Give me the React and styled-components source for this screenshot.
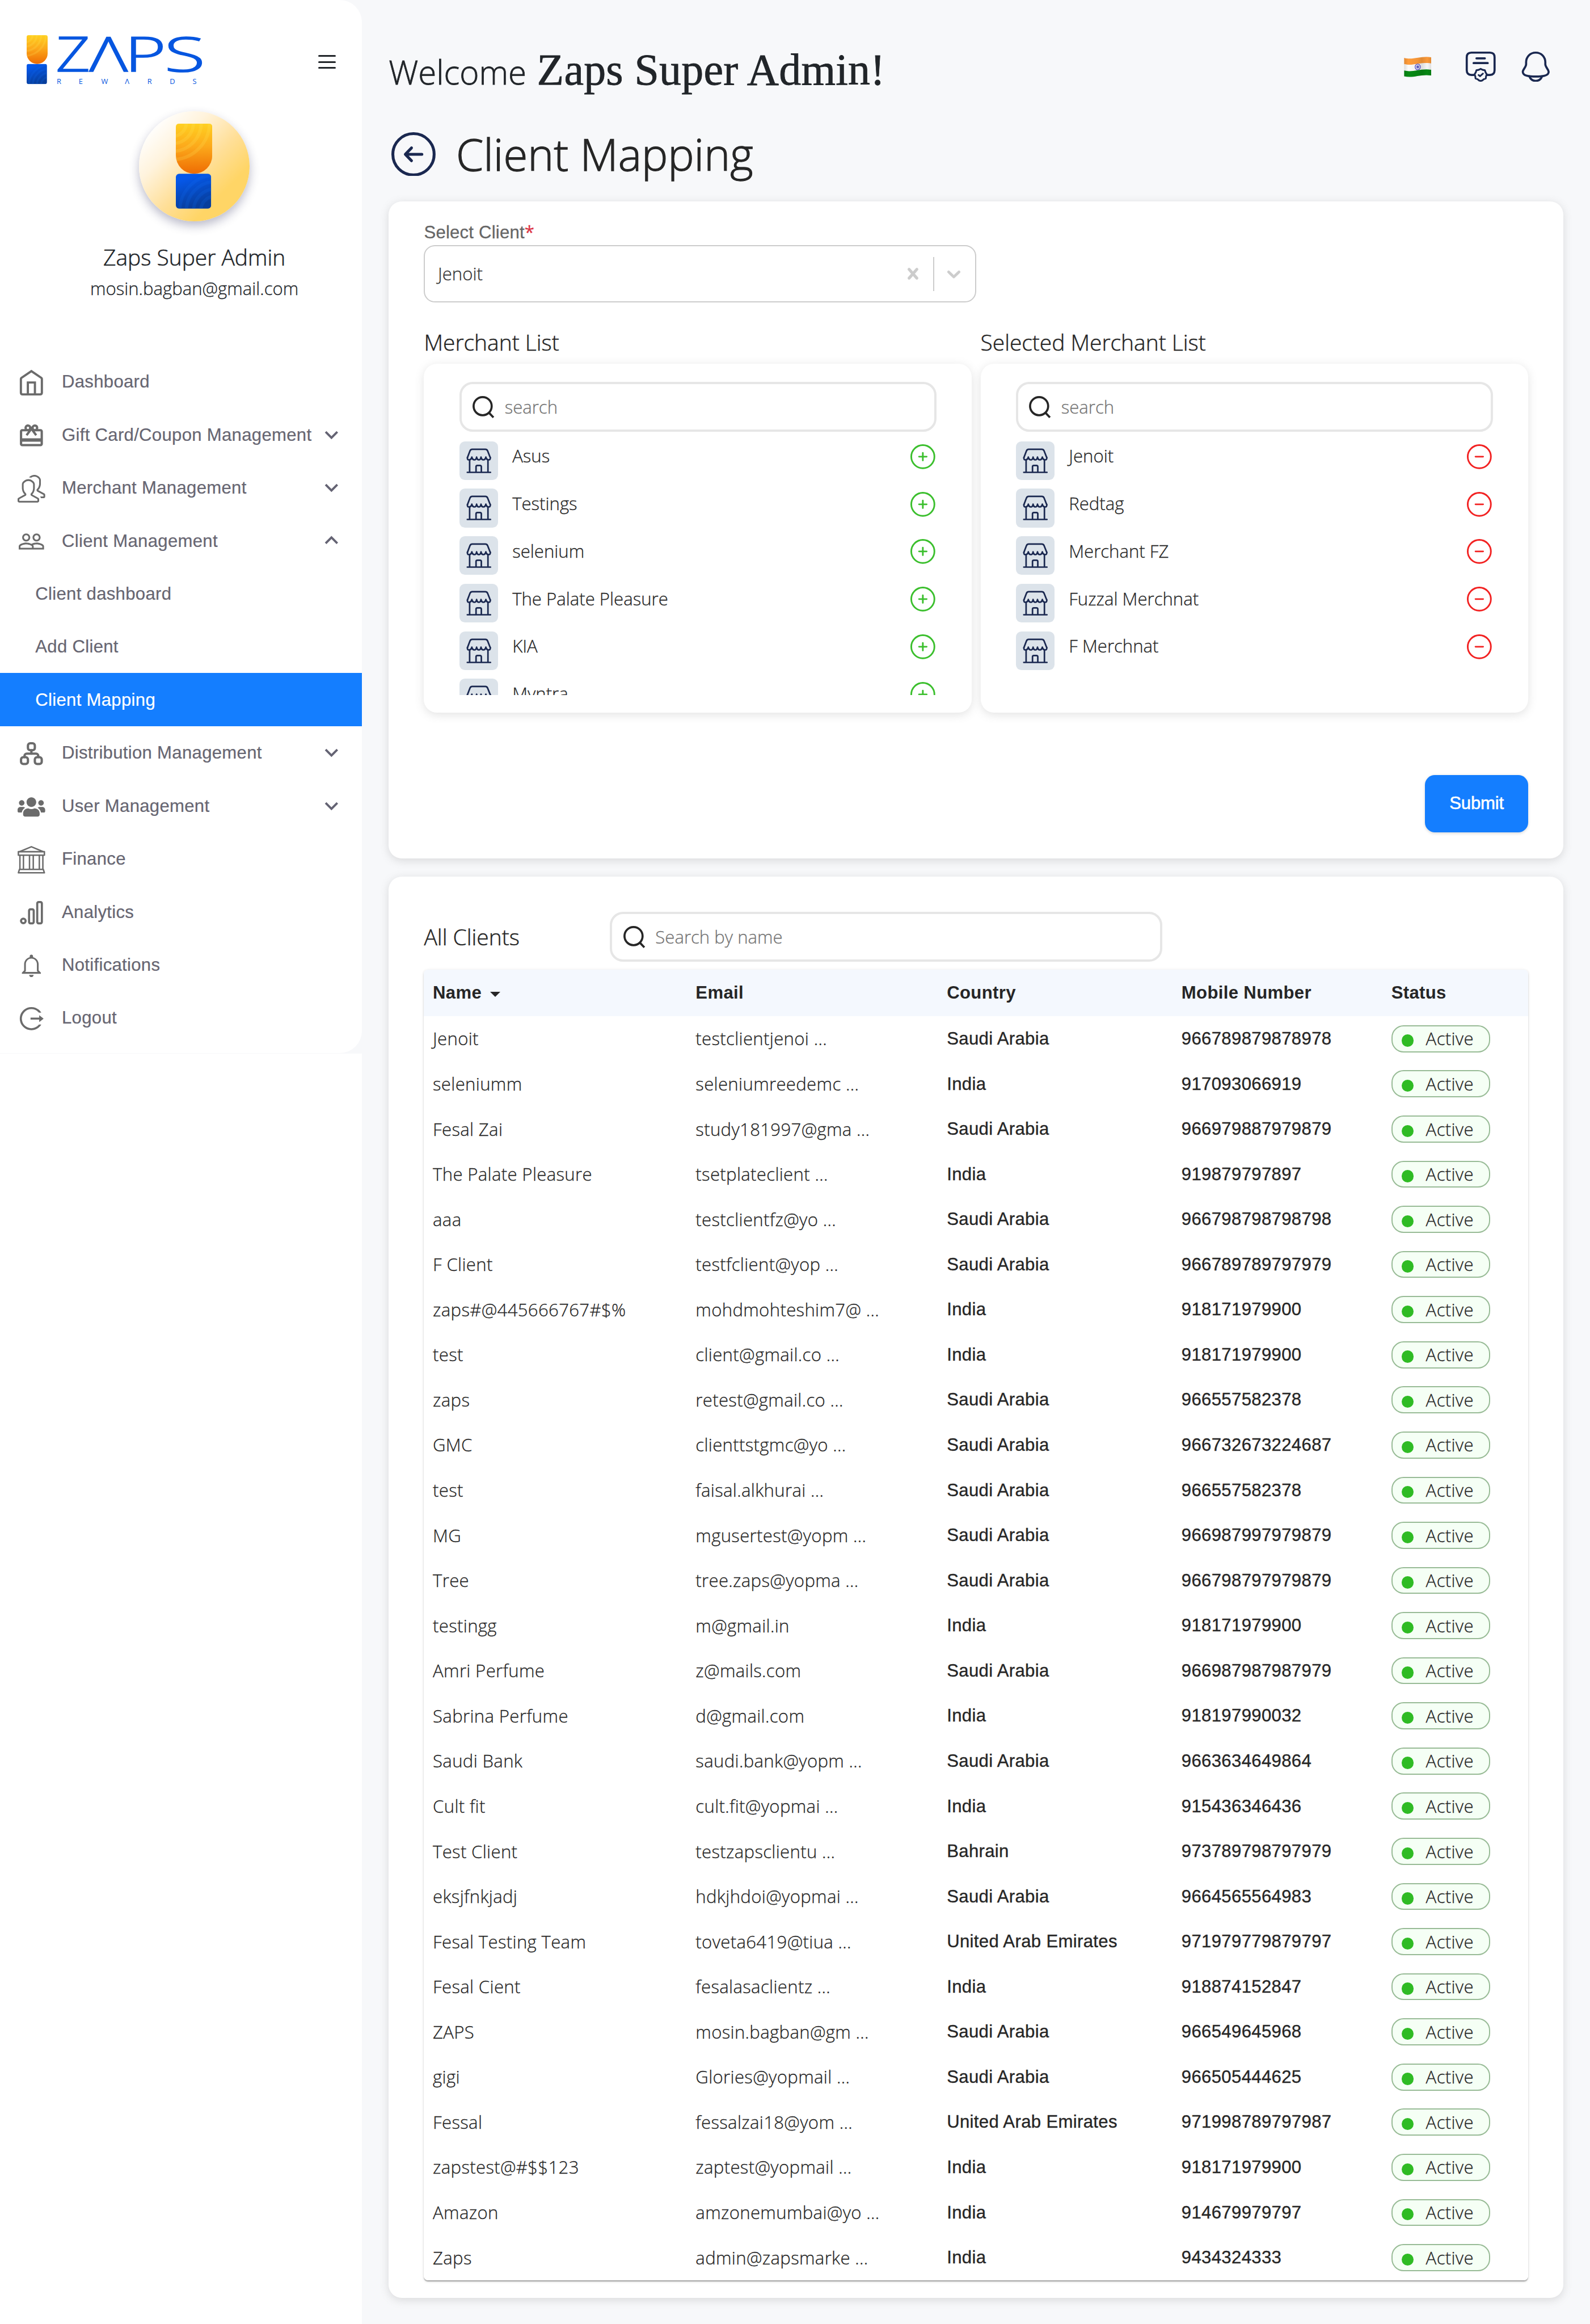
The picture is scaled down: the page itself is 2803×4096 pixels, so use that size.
import React from "react";
import styled, { createGlobalStyle, css } from "styled-components";
import {
  MdKeyboardArrowDown,
  MdKeyboardArrowUp,
  MdOutlineRedeem,
  MdPeopleOutline,
} from "react-icons/md";
import { SlPeople } from "react-icons/sl";
import { TbSitemap } from "react-icons/tb";
import { FaUsers } from "react-icons/fa";
import { IoMdNotificationsOutline } from "react-icons/io";
import { AiOutlineLogout } from "react-icons/ai";

const sans = `"Liberation Sans", Arial, sans-serif`;
const open = `"Open Sans", "Noto Sans", sans-serif`;
const serif = `"Liberation Serif", "Times New Roman", serif`;
const hair = "1.04px";
const thick = "2.06px";

const GlobalStyle = createGlobalStyle`
  * { box-sizing: border-box; }
  html, body { margin: 0; padding: 0; background: #f7f8fa; overflow: hidden; }
  h1, h2, h3, p, ul { margin: 0; padding: 0; font-weight: inherit; }
  button, input { font: inherit; }
`;

/* The layout is written for a 1440px canvas and magnified as a whole. */
const Page = styled.div`
  zoom: 1.9466;
  display: flex;
  width: 1440px;
  height: 2104.2px;
  font-family: ${open};
  font-weight: 300;
  font-size: 16px;
  line-height: 24px;
  color: #262626;
  -webkit-text-stroke: 0.16px currentColor;
`;

/* ---------- sidebar ---------- */

const SideColumn = styled.aside`
  width: 328px;
  flex: none;
  background: #fff;
`;

const SideBackdrop = styled.div`
  height: 954px;
  background: #f7f8fa;
`;

const SidePanel = styled.div`
  height: 953.5px;
  background: #fff;
  border-radius: 0 20px 20px 0;
  display: flex;
  flex-direction: column;
`;

const LogoRow = styled.div`
  display: flex;
  justify-content: space-between;
  padding: 32px 24px 0 24px;
  height: 100.5px;
`;

const MenuLines = styled.div`
  display: flex;
  flex-direction: column;
  gap: 4px;
  margin-top: 17.8px;
  width: 16px;
  height: 13px;
  span {
    height: 1.5px;
    border-radius: 1px;
    background: #212529;
  }
`;

const Profile = styled.div`
  display: flex;
  flex-direction: column;
  align-items: center;
  padding-left: 24px;
  color: #212529;
  height: 221px;
`;

const Avatar = styled.div`
  width: 100px;
  height: 100px;
  border-radius: 50%;
  display: flex;
  align-items: center;
  justify-content: center;
  background: linear-gradient(135deg, #ffffff 12%, #fff3dc 32%, #ffdf98 55%, #ffd566 75%);
  box-shadow: 0 4px 9px rgba(30, 30, 80, 0.3);
`;

const ProfileName = styled.p`
  margin-top: 17.5px;
  font-size: 20px;
  line-height: 30px;
  -webkit-text-stroke-width: 0.28px;
`;

const ProfileMail = styled.p`
  margin-top: 1.3px;
`;

const Nav = styled.nav`
  display: flex;
  flex-direction: column;
`;

const NavItem = styled.div`
  display: flex;
  align-items: center;
  height: 48px;
  padding-left: ${(p) => (p.$sub ? 32 : 16)}px;
  padding-right: 16px;
  font-family: ${sans};
  font-weight: 400;
  letter-spacing: 0.15px;
  color: ${(p) => (p.$active ? "#fff" : "#676672")};
  background: ${(p) => (p.$active ? "#147eff" : "transparent")};
  -webkit-text-stroke-width: 0.12px;
`;

const NavIcon = styled.span`
  display: flex;
  align-items: center;
  justify-content: center;
  width: 25px;
  height: 25px;
  margin: 2px 15px 0 0;
  color: #6b6b6b;
`;

const NavText = styled.span`
  flex: 1;
  padding-top: 1.2px;
  white-space: nowrap;
`;

const NavChevron = styled.span`
  display: flex;
  color: #646373;
`;

/* ---------- main ---------- */

const Main = styled.main`
  flex: 1;
  min-width: 0;
  padding: 39px 24px 0;
  background: #f7f8fa;
`;

const TopBar = styled.header`
  display: flex;
  justify-content: space-between;
  height: 48px;
`;

const Greeting = styled.h1`
  display: flex;
  align-items: baseline;
  height: 48px;
  padding-top: 0.4px;
  font-size: 30px;
  line-height: 48px;
  color: #212529;
  white-space: pre;
  -webkit-text-stroke-width: 0.4px;
`;

const UserName = styled.span`
  margin-left: 1.7px;
  font-family: ${serif};
  font-weight: 400;
  font-size: 40px;
  letter-spacing: 0.12px;
`;

const TopIcons = styled.div`
  display: flex;
  align-items: flex-start;
  padding: 7px 12px 0 0;
  color: #1a2850;
  svg {
    display: block;
  }
`;

const FlagBox = styled.span`
  margin: 5.3px 30.7px 0 0;
`;

const CertBox = styled.span`
  margin-right: 23px;
`;

const TitleRow = styled.div`
  display: flex;
  align-items: center;
  height: 48px;
  margin-top: 28.5px;
  padding-left: 2.4px;
  gap: 18.6px;
  color: #1a2850;
`;

const Title = styled.h2`
  padding-top: 0.6px;
  font-size: 40px;
  line-height: 48px;
  color: #262626;
  -webkit-text-stroke-width: 0.65px;
`;

const Card = styled.section`
  background: #fff;
  border-radius: 12px;
  box-shadow: 0 2px 8px rgba(99, 99, 99, 0.2);
`;

const MappingCard = styled(Card)`
  height: 595px;
  margin-top: 19px;
  padding: 15.5px 32px 0;
`;

const Label = styled.label`
  display: block;
  height: 24px;
  padding-top: 0.8px;
  font-family: ${sans};
  font-weight: 400;
  letter-spacing: 0.1px;
  color: #666;
`;

const Required = styled.span`
  font-family: ${open};
  line-height: 1;
  color: #dc3545;
`;

const Select = styled.div`
  display: flex;
  align-items: center;
  width: 500px;
  height: 52px;
  border: ${hair} solid #ccc;
  border-radius: 10px;
  padding: 0 1px 0 11.6px;
  color: #333;
`;

const SelectValue = styled.span`
  flex: 1;
`;

const Indicator = styled.span`
  display: flex;
  padding: 8px;
  color: #ccc;
`;

const Separator = styled.span`
  width: ${hair};
  height: 31px;
  background: #ccc;
`;

const Lists = styled.div`
  display: grid;
  grid-template-columns: 496px 496px;
  gap: 8px;
  margin-top: 21px;
`;

const Heading = styled.h3`
  font-size: 20px;
  line-height: 30px;
  white-space: nowrap;
  -webkit-text-stroke-width: 0.26px;
`;

const ListPanel = styled.div`
  height: 316px;
  margin-top: 4.5px;
  padding: 16.3px 32px;
  border-radius: 12px;
  background: #fff;
  box-shadow: 0 2px 8px rgba(99, 99, 99, 0.18);
`;

const SearchBox = styled.div`
  display: flex;
  align-items: center;
  width: ${(p) => p.$width || "100%"};
  height: 45.3px;
  padding-left: 8.8px;
  gap: 8.2px;
  border: ${thick} solid #e6e6e6;
  border-radius: 12px;
  color: #757575;
  svg {
    flex: none;
    color: #262626;
  }
`;

const ListBody = styled.div`
  height: 238.3px;
  padding-top: 8.5px;
  overflow: hidden;
`;

const ListItem = styled.div`
  display: flex;
  align-items: flex-start;
  height: 43px;
`;

const StoreTile = styled.span`
  display: flex;
  width: 35px;
  height: 35px;
  border-radius: 5px;
  background: #dce3ea;
  color: #1a2850;
`;

const ItemName = styled.span`
  flex: 1;
  margin: 1.4px 0 0 13px;
`;

const ItemAction = styled.span`
  display: flex;
  margin: 2.2px 0.5px 0 0;
  color: ${(p) => (p.$remove ? "#f22222" : "#3bbf2d")};
`;

const SubmitRow = styled.div`
  display: flex;
  justify-content: flex-end;
  margin-top: 56.3px;
`;

const SubmitButton = styled.button`
  width: 93.5px;
  height: 52px;
  border: 0;
  border-radius: 9px;
  padding: 0;
  font-family: ${sans};
  font-weight: 400;
  letter-spacing: -0.1px;
  color: #fff;
  background: #147eff;
  box-shadow: 0 1px 3px rgba(0, 0, 0, 0.15);
  -webkit-text-stroke: 0.3px #fff;
`;

const ClientsCard = styled(Card)`
  height: 1287px;
  margin-top: 16px;
  padding: 32px 32px 0;
`;

const ClientsHead = styled.div`
  display: grid;
  grid-template-columns: 168.5px auto;
  align-items: center;
  justify-content: start;
  height: 45px;
`;

const Table = styled.div`
  margin-top: 7.6px;
  border-radius: 4px;
  overflow: hidden;
  background: #fff;
  letter-spacing: 0.17px;
`;

const TableShell = styled.div`
  border-radius: 4px;
  box-shadow: 0 2px 1px -1px rgba(0, 0, 0, 0.2), 0 1px 1px rgba(0, 0, 0, 0.14),
    0 1px 3px rgba(0, 0, 0, 0.12);
`;

const rowGrid = css`
  display: grid;
  grid-template-columns: 238px 227.5px 212.5px 190px 1fr;
  align-items: center;
  padding-left: 8px;
`;

const HeadRow = styled.div`
  ${rowGrid}
  height: 42px;
  background: #f4f8fe;
  font-family: ${sans};
  font-weight: 700;
  color: #262626;
  -webkit-text-stroke-width: 0;
`;

const HeadCell = styled.span`
  display: flex;
  align-items: center;
  padding-top: 0.4px;
`;

const SortCaret = styled.span`
  width: 0;
  height: 0;
  margin: 2px 0 0 7.5px;
  border-left: 5px solid transparent;
  border-right: 5px solid transparent;
  border-top: 5px solid #262626;
`;

const Row = styled.div`
  ${rowGrid}
  height: 40.875px;
`;

const Cell = styled.span`
  white-space: pre;
  line-height: 24px;
`;

const PlainCell = styled(Cell)`
  padding-top: 0.6px;
  font-family: ${sans};
  font-weight: 400;
  -webkit-text-stroke-width: 0.2px;
`;

const Pill = styled.span`
  display: flex;
  align-items: center;
  width: 89.5px;
  height: 24.5px;
  padding-left: 8.3px;
  gap: 11px;
  border: ${hair} solid #98bb96;
  border-radius: 11px;
  background: #f5fff5;
`;

const Dot = styled.span`
  width: 11px;
  height: 11px;
  margin-top: 3.5px;
  border-radius: 50%;
  background: #2fbb24;
`;

/* ---------- drawings ---------- */

const Mark = ({ width, id }) => (
  <svg width={width} height={(width * 77) / 33} viewBox="0 0 33 77">
    <defs>
      <linearGradient id={`${id}c`} x1="0" y1="0" x2="0" y2="1">
        <stop offset="0" stopColor="#ffd021" />
        <stop offset="0.45" stopColor="#fca91b" />
        <stop offset="1" stopColor="#ee6a02" />
      </linearGradient>
      <linearGradient id={`${id}b`} x1="0" y1="0" x2="0.3" y2="1">
        <stop offset="0.2" stopColor="#0558ea" />
        <stop offset="1" stopColor="#073e9c" />
      </linearGradient>
      <clipPath id={`${id}k`}>
        <path d="M3 0H30Q33 0 33 3V28.8A16.5 16.5 0 0 1 0 28.8V3Q0 0 3 0Z" />
      </clipPath>
      <clipPath id={`${id}l`}>
        <rect x="0" y="45.3" width="32" height="31.6" rx="3" />
      </clipPath>
    </defs>
    <g clipPath={`url(#${id}k)`}>
      <rect width="33" height="46" fill={`url(#${id}c)`} />
      <g fill="none" stroke="#ffe75a" strokeOpacity="0.2" strokeWidth="3">
        <circle cx="-3" cy="-1" r="12.5" />
        <circle cx="-3" cy="-1" r="19" />
        <circle cx="-3" cy="-1" r="26" />
        <circle cx="-3" cy="-1" r="33.5" />
      </g>
    </g>
    <g clipPath={`url(#${id}l)`}>
      <rect y="45" width="32" height="32" fill={`url(#${id}b)`} />
      <g fill="none" stroke="#1378ff" strokeOpacity="0.16" strokeWidth="3">
        <circle cx="36" cy="79" r="13.5" />
        <circle cx="36" cy="79" r="20" />
        <circle cx="36" cy="79" r="26.5" />
        <circle cx="36" cy="79" r="32.5" />
      </g>
    </g>
  </svg>
);

const LogoBox = styled.div`
  display: flex;
  gap: 9px;
  svg {
    overflow: visible;
  }
`;

const Wordmark = () => (
  <svg width="132" height="46" viewBox="0 0 132 46" fill="#0656e0" fontFamily={open}>
    <g fontSize="43.7" fontWeight="300" stroke="#0656e0" strokeWidth="0.8">
      <text x="-1.3" y="33" textLength="31" lengthAdjust="spacingAndGlyphs">Z</text>
      <text x="29" y="33" textLength="34.7" lengthAdjust="spacingAndGlyphs">Λ</text>
      <text x="61" y="33" textLength="37.5" lengthAdjust="spacingAndGlyphs">P</text>
      <text x="97" y="33" textLength="37" lengthAdjust="spacingAndGlyphs">S</text>
    </g>
    <text x="-0.5 19.4 39.8 61.3 81.5 101.8 122.5" y="44.3" fontSize="6.6" fontWeight="400" stroke="none">
      REWΛRDS
    </text>
  </svg>
);

const line = {
  fill: "none",
  stroke: "currentColor",
  strokeLinecap: "round",
  strokeLinejoin: "round",
};

const BackIcon = () => (
  <svg width="40" height="40" viewBox="0 0 40 40" {...line} strokeWidth="2.6">
    <circle cx="20" cy="20" r="18.7" />
    <path d="M27.6 20H12.8M18.2 14.2L12.6 20L18.2 25.8" />
  </svg>
);

const HomeIcon = () => (
  <svg width="25" height="25" viewBox="0 0 25 25" {...line} strokeWidth="2" strokeLinejoin="miter">
    <path d="M3 9.2Q3 8.6 3.5 8.2L12.5 2.1L21.5 8.2Q22 8.6 22 9.2V21.6Q22 23.2 20.4 23.2H4.6Q3 23.2 3 21.6Z" />
    <path d="M9.3 23V12.4H15.7V23" strokeLinecap="butt" />
  </svg>
);

const BankIcon = () => (
  <svg width="25" height="25" viewBox="0 0 25 25" {...line} strokeWidth="1.3">
    <path d="M2.2 5L12.5 0.7L22.8 5" />
    <path d="M0.7 5.2H24.3V8.3H0.7Z" />
    <path d="M2.1 8.5V21M5.3 8.5V21M10.8 8.5V21M14.2 8.5V21M19.7 8.5V21M22.9 8.5V21" />
    <path d="M1.7 21.2H23.3L24.3 24.3H0.7Z" />
  </svg>
);

const ChartIcon = () => (
  <svg width="25" height="25" viewBox="0 0 25 25" {...line} strokeWidth="1.9">
    <circle cx="5.2" cy="20.1" r="2.1" />
    <rect x="10.4" y="9.6" width="4.2" height="12.7" rx="1.2" />
    <rect x="17.8" y="3" width="4.2" height="19.3" rx="1.2" />
  </svg>
);

const SearchIcon = () => (
  <svg width="22" height="22" viewBox="0 0 22 22" {...line} strokeWidth="1.9" strokeLinecap="butt">
    <circle cx="10.2" cy="10.2" r="8.2" />
    <path d="M15.4 15.6L20 20.4" />
  </svg>
);

const StoreIcon = () => (
  <svg width="35" height="35" viewBox="0 0 35 35" {...line} strokeWidth="1.4">
    <path d="M7.2 14.6L9.6 8.4Q10.2 7.1 11.5 7.1H23.5Q24.8 7.1 25.4 8.4L27.9 14.6" />
    <path d="M7.2 14.6Q6.9 16.6 8.6 16.7Q10.6 16.7 11.2 14.2Q11.8 16.7 13.5 16.7Q15.1 16.7 15.5 14.2Q16 16.7 17.5 16.7Q19.1 16.7 19.5 14.2Q20 16.7 21.6 16.7Q23.3 16.7 23.9 14.2Q24.5 16.7 26.4 16.7Q28.2 16.6 27.9 14.6" />
    <path d="M9.2 17V27.6M25.8 17V27.6M7.1 28H28.1" />
    <path d="M15 27.6V23Q15 21.8 16.2 21.8H18.6Q19.8 21.8 19.8 23V27.6" />
  </svg>
);

const CircleIcon = ({ minus }) => (
  <svg width="23.5" height="23.5" viewBox="0 0 23.5 23.5" {...line} strokeWidth="1.5">
    <circle cx="11.75" cy="11.75" r="10.5" />
    <path d={minus ? "M8.3 11.75H15.2" : "M8.3 11.75H15.2M11.75 8.3V15.2"} />
  </svg>
);

const CrossIcon = () => (
  <svg width="20" height="20" viewBox="0 0 20 20" fill="currentColor" stroke="currentColor" strokeWidth="0.3">
    <path d="M14.348 14.849c-0.469 0.469-1.229 0.469-1.697 0l-2.651-3.030-2.651 3.029c-0.469 0.469-1.229 0.469-1.697 0-0.469-0.469-0.469-1.229 0-1.697l2.758-3.15-2.759-3.152c-0.469-0.469-0.469-1.228 0-1.697s1.228-0.469 1.697 0l2.652 3.031 2.651-3.031c0.469-0.469 1.228-0.469 1.697 0s0.469 1.229 0 1.697l-2.758 3.152 2.758 3.15c0.469 0.469 0.469 1.229 0 1.698z" />
  </svg>
);

const DownIcon = () => (
  <svg width="20" height="20" viewBox="0 0 20 20" fill="currentColor" stroke="currentColor" strokeWidth="0.3">
    <path d="M4.516 7.548c0.436-0.446 1.043-0.481 1.576 0l3.908 3.747 3.908-3.747c0.533-0.481 1.141-0.446 1.574 0 0.436 0.445 0.408 1.197 0 1.615-0.406 0.418-4.695 4.502-4.695 4.502-0.217 0.223-0.502 0.335-0.787 0.335s-0.57-0.112-0.789-0.335c0 0-4.287-4.084-4.695-4.502s-0.436-1.17 0-1.615z" />
  </svg>
);

const Flag = () => (
  <svg width="25" height="18.4" viewBox="0 0 25 18.4">
    <defs>
      <linearGradient id="shade" x1="0" y1="0" x2="1" y2="0">
        <stop offset="0" stopColor="#000" stopOpacity="0.12" />
        <stop offset="0.15" stopColor="#000" stopOpacity="0" />
        <stop offset="0.5" stopColor="#000" stopOpacity="0.05" />
        <stop offset="0.65" stopColor="#000" stopOpacity="0.12" />
        <stop offset="0.85" stopColor="#000" stopOpacity="0.02" />
        <stop offset="1" stopColor="#000" stopOpacity="0.12" />
      </linearGradient>
    </defs>
    <path fill="#ff9c3a" d="M0.2 1C8 3.4 15 -1 24.8 0.5V6.2C15 4.6 8 9 0.2 6.8Z" />
    <path fill="#fbfbfb" d="M0.2 6.6C8 8.8 15 4.4 24.8 6V12C15 10.4 8 14.8 0.2 12.6Z" />
    <path fill="#078a14" d="M0.2 12.5C8 14.6 15 10.2 24.8 11.8V17C15 15.4 8 19.8 0.2 17.7Z" />
    <g fill="none" stroke="#4640c8" strokeWidth="0.6">
      <ellipse cx="12.5" cy="9.2" rx="2.4" ry="2.6" />
      <circle cx="12.5" cy="9.2" r="1.3" strokeWidth="0.4" />
    </g>
    <circle cx="12.5" cy="9.2" r="0.8" fill="#3a35b8" />
    <path fill="url(#shade)" d="M0.2 1C8 3.4 15 -1 24.8 0.5V17C15 15.4 8 19.8 0.2 17.7Z" />
  </svg>
);

const CertificateIcon = () => (
  <svg width="28" height="28" viewBox="0 0 28 28" {...line} strokeWidth="1.9">
    <path d="M7.8 21.6H5.6Q1.4 21.6 1.4 17.4V5.6Q1.4 1.4 5.6 1.4H22.4Q26.6 1.4 26.6 5.6V17.4Q26.6 21.6 22.4 21.6H20" />
    <path d="M10.2 6.6H17.8M7.6 10.9H20.4" />
    <path
      strokeWidth="1.6"
      d="M14 16.1L15.8 17L17.8 17.3L18.4 19.2L19.5 21L18.9 22.8L18.6 24.8L16.8 25.5L15.5 26.6L14 27.1L12.5 26.6L11.2 25.5L9.4 24.8L9.1 22.8L8.5 21L9.6 19.2L10.2 17.3L12.2 17Z"
    />
    <path strokeWidth="1.5" d="M12.1 21.7L13.4 22.8L16.1 20.4" />
  </svg>
);

const BellIcon = () => (
  <svg width="26" height="28" viewBox="0 0 26 28" {...line} strokeWidth="1.9">
    <path d="M13 1.4C7.9 1.4 4.3 5.3 4.3 10.2V12C4.3 14.6 1.4 16.4 1.3 18.8C1.2 22.6 7.6 23.1 13 23.1S24.8 22.6 24.7 18.8C24.6 16.4 21.7 14.6 21.7 12V10.2C21.7 5.3 18.1 1.4 13 1.4Z" />
    <path d="M7.3 23C8.3 25.5 10.4 27 13 27S17.7 25.5 18.7 23" />
  </svg>
);

/* ---------- data ---------- */

const navItems = [
  { label: "Dashboard", icon: <HomeIcon /> },
  { label: "Gift Card/Coupon Management", icon: <MdOutlineRedeem size={25} />, open: false },
  { label: "Merchant Management", icon: <SlPeople size={25} />, open: false },
  { label: "Client Management", icon: <MdPeopleOutline size={25} />, open: true },
  { label: "Client dashboard", sub: true },
  { label: "Add Client", sub: true },
  { label: "Client Mapping", sub: true, active: true },
  { label: "Distribution Management", icon: <TbSitemap size={25} />, open: false },
  { label: "User Management", icon: <FaUsers size={25} />, open: false },
  { label: "Finance", icon: <BankIcon /> },
  { label: "Analytics", icon: <ChartIcon /> },
  { label: "Notifications", icon: <IoMdNotificationsOutline size={25} /> },
  { label: "Logout", icon: <AiOutlineLogout size={25} /> },
];

const merchants = ["Asus", "Testings", "selenium", "The Palate Pleasure", "KIA", "Myntra"];
const selected = ["Jenoit", "Redtag", "Merchant FZ", "Fuzzal Merchnat", "F Merchnat"];

const clients = [
  ["Jenoit", "testclientjenoi ...", "Saudi Arabia", "966789879878978"],
  ["seleniumm", "seleniumreedemc ...", "India", "917093066919"],
  ["Fesal Zai", "study181997@gma ...", "Saudi Arabia", "966979887979879"],
  ["The Palate Pleasure", "tsetplateclient ...", "India", "919879797897"],
  ["aaa", "testclientfz@yo ...", "Saudi Arabia", "966798798798798"],
  ["F Client", "testfclient@yop ...", "Saudi Arabia", "966789789797979"],
  ["zaps#@445666767#$%", "mohdmohteshim7@ ...", "India", "918171979900"],
  ["test", "client@gmail.co ...", "India", "918171979900"],
  ["zaps", "retest@gmail.co ...", "Saudi Arabia", "966557582378"],
  ["GMC", "clienttstgmc@yo ...", "Saudi Arabia", "966732673224687"],
  ["test", "faisal.alkhurai ...", "Saudi Arabia", "966557582378"],
  ["MG", "mgusertest@yopm ...", "Saudi Arabia", "966987997979879"],
  ["Tree", "tree.zaps@yopma ...", "Saudi Arabia", "966798797979879"],
  ["testingg", "m@gmail.in", "India", "918171979900"],
  ["Amri Perfume", "z@mails.com", "Saudi Arabia", "966987987987979"],
  ["Sabrina Perfume", "d@gmail.com", "India", "918197990032"],
  ["Saudi Bank", "saudi.bank@yopm ...", "Saudi Arabia", "9663634649864"],
  ["Cult fit", "cult.fit@yopmai ...", "India", "915436346436"],
  ["Test Client", "testzapsclientu ...", "Bahrain", "973789798797979"],
  ["eksjfnkjadj", "hdkjhdoi@yopmai ...", "Saudi Arabia", "9664565564983"],
  ["Fesal Testing Team", "toveta6419@tiua ...", "United Arab Emirates", "971979779879797"],
  ["Fesal Cient", "fesalasaclientz ...", "India", "918874152847"],
  ["ZAPS", "mosin.bagban@gm ...", "Saudi Arabia", "966549645968"],
  ["gigi", "Glories@yopmail ...", "Saudi Arabia", "966505444625"],
  ["Fessal", "fessalzai18@yom ...", "United Arab Emirates", "971998789797987"],
  ["zapstest@#$$123", "zaptest@yopmail ...", "India", "918171979900"],
  ["Amazon", "amzonemumbai@yo ...", "India", "914679979797"],
  ["Zaps", "admin@zapsmarke ...", "India", "9434324333"],
];

/* ---------- composition ---------- */

const MerchantPanel = ({ title, items, remove }) => (
  <div>
    <Heading>{title}</Heading>
    <ListPanel>
      <SearchBox>
        <SearchIcon />
        <span>search</span>
      </SearchBox>
      <ListBody>
        {items.map((name) => (
          <ListItem key={name}>
            <StoreTile>
              <StoreIcon />
            </StoreTile>
            <ItemName>{name}</ItemName>
            <ItemAction $remove={remove}>
              <CircleIcon minus={remove} />
            </ItemAction>
          </ListItem>
        ))}
      </ListBody>
    </ListPanel>
  </div>
);

export default function App() {
  return (
    <>
      <GlobalStyle />
      <Page>
        <SideColumn>
          <SideBackdrop>
            <SidePanel>
              <LogoRow>
                <LogoBox>
                  <Mark width={19} id="lg" />
                  <Wordmark />
                </LogoBox>
                <MenuLines>
                  <span />
                  <span />
                  <span />
                </MenuLines>
              </LogoRow>
              <Profile>
                <Avatar>
                  <Mark width={33} id="av" />
                </Avatar>
                <ProfileName>Zaps Super Admin</ProfileName>
                <ProfileMail>mosin.bagban@gmail.com</ProfileMail>
              </Profile>
              <Nav>
                {navItems.map((item) => (
                  <NavItem key={item.label} $sub={item.sub} $active={item.active}>
                    {item.icon && <NavIcon>{item.icon}</NavIcon>}
                    <NavText>{item.label}</NavText>
                    {item.open !== undefined && (
                      <NavChevron>
                        {item.open ? <MdKeyboardArrowUp size={24} /> : <MdKeyboardArrowDown size={24} />}
                      </NavChevron>
                    )}
                  </NavItem>
                ))}
              </Nav>
            </SidePanel>
          </SideBackdrop>
        </SideColumn>

        <Main>
          <TopBar>
            <Greeting>
              <span>Welcome </span>
              <UserName>Zaps Super Admin!</UserName>
            </Greeting>
            <TopIcons>
              <FlagBox>
                <Flag />
              </FlagBox>
              <CertBox>
                <CertificateIcon />
              </CertBox>
              <BellIcon />
            </TopIcons>
          </TopBar>

          <TitleRow>
            <BackIcon />
            <Title>Client Mapping</Title>
          </TitleRow>

          <MappingCard>
            <Label>
              Select Client<Required>*</Required>
            </Label>
            <Select>
              <SelectValue>Jenoit</SelectValue>
              <Indicator>
                <CrossIcon />
              </Indicator>
              <Separator />
              <Indicator>
                <DownIcon />
              </Indicator>
            </Select>
            <Lists>
              <MerchantPanel title="Merchant List" items={merchants} />
              <MerchantPanel title="Selected Merchant List" items={selected} remove />
            </Lists>
            <SubmitRow>
              <SubmitButton>Submit</SubmitButton>
            </SubmitRow>
          </MappingCard>

          <ClientsCard>
            <ClientsHead>
              <Heading>All Clients</Heading>
              <SearchBox $width="500px">
                <SearchIcon />
                <span>Search by name</span>
              </SearchBox>
            </ClientsHead>
            <TableShell>
              <Table>
                <HeadRow>
                  <HeadCell>
                    Name
                    <SortCaret />
                  </HeadCell>
                  <HeadCell>Email</HeadCell>
                  <HeadCell>Country</HeadCell>
                  <HeadCell>Mobile Number</HeadCell>
                  <HeadCell>Status</HeadCell>
                </HeadRow>
                {clients.map(([name, email, country, mobile], i) => (
                  <Row key={i}>
                    <Cell>{name}</Cell>
                    <Cell>{email}</Cell>
                    <PlainCell>{country}</PlainCell>
                    <PlainCell>{mobile}</PlainCell>
                    <Pill>
                      <Dot />
                      <span>Active</span>
                    </Pill>
                  </Row>
                ))}
              </Table>
            </TableShell>
          </ClientsCard>
        </Main>
      </Page>
    </>
  );
}
